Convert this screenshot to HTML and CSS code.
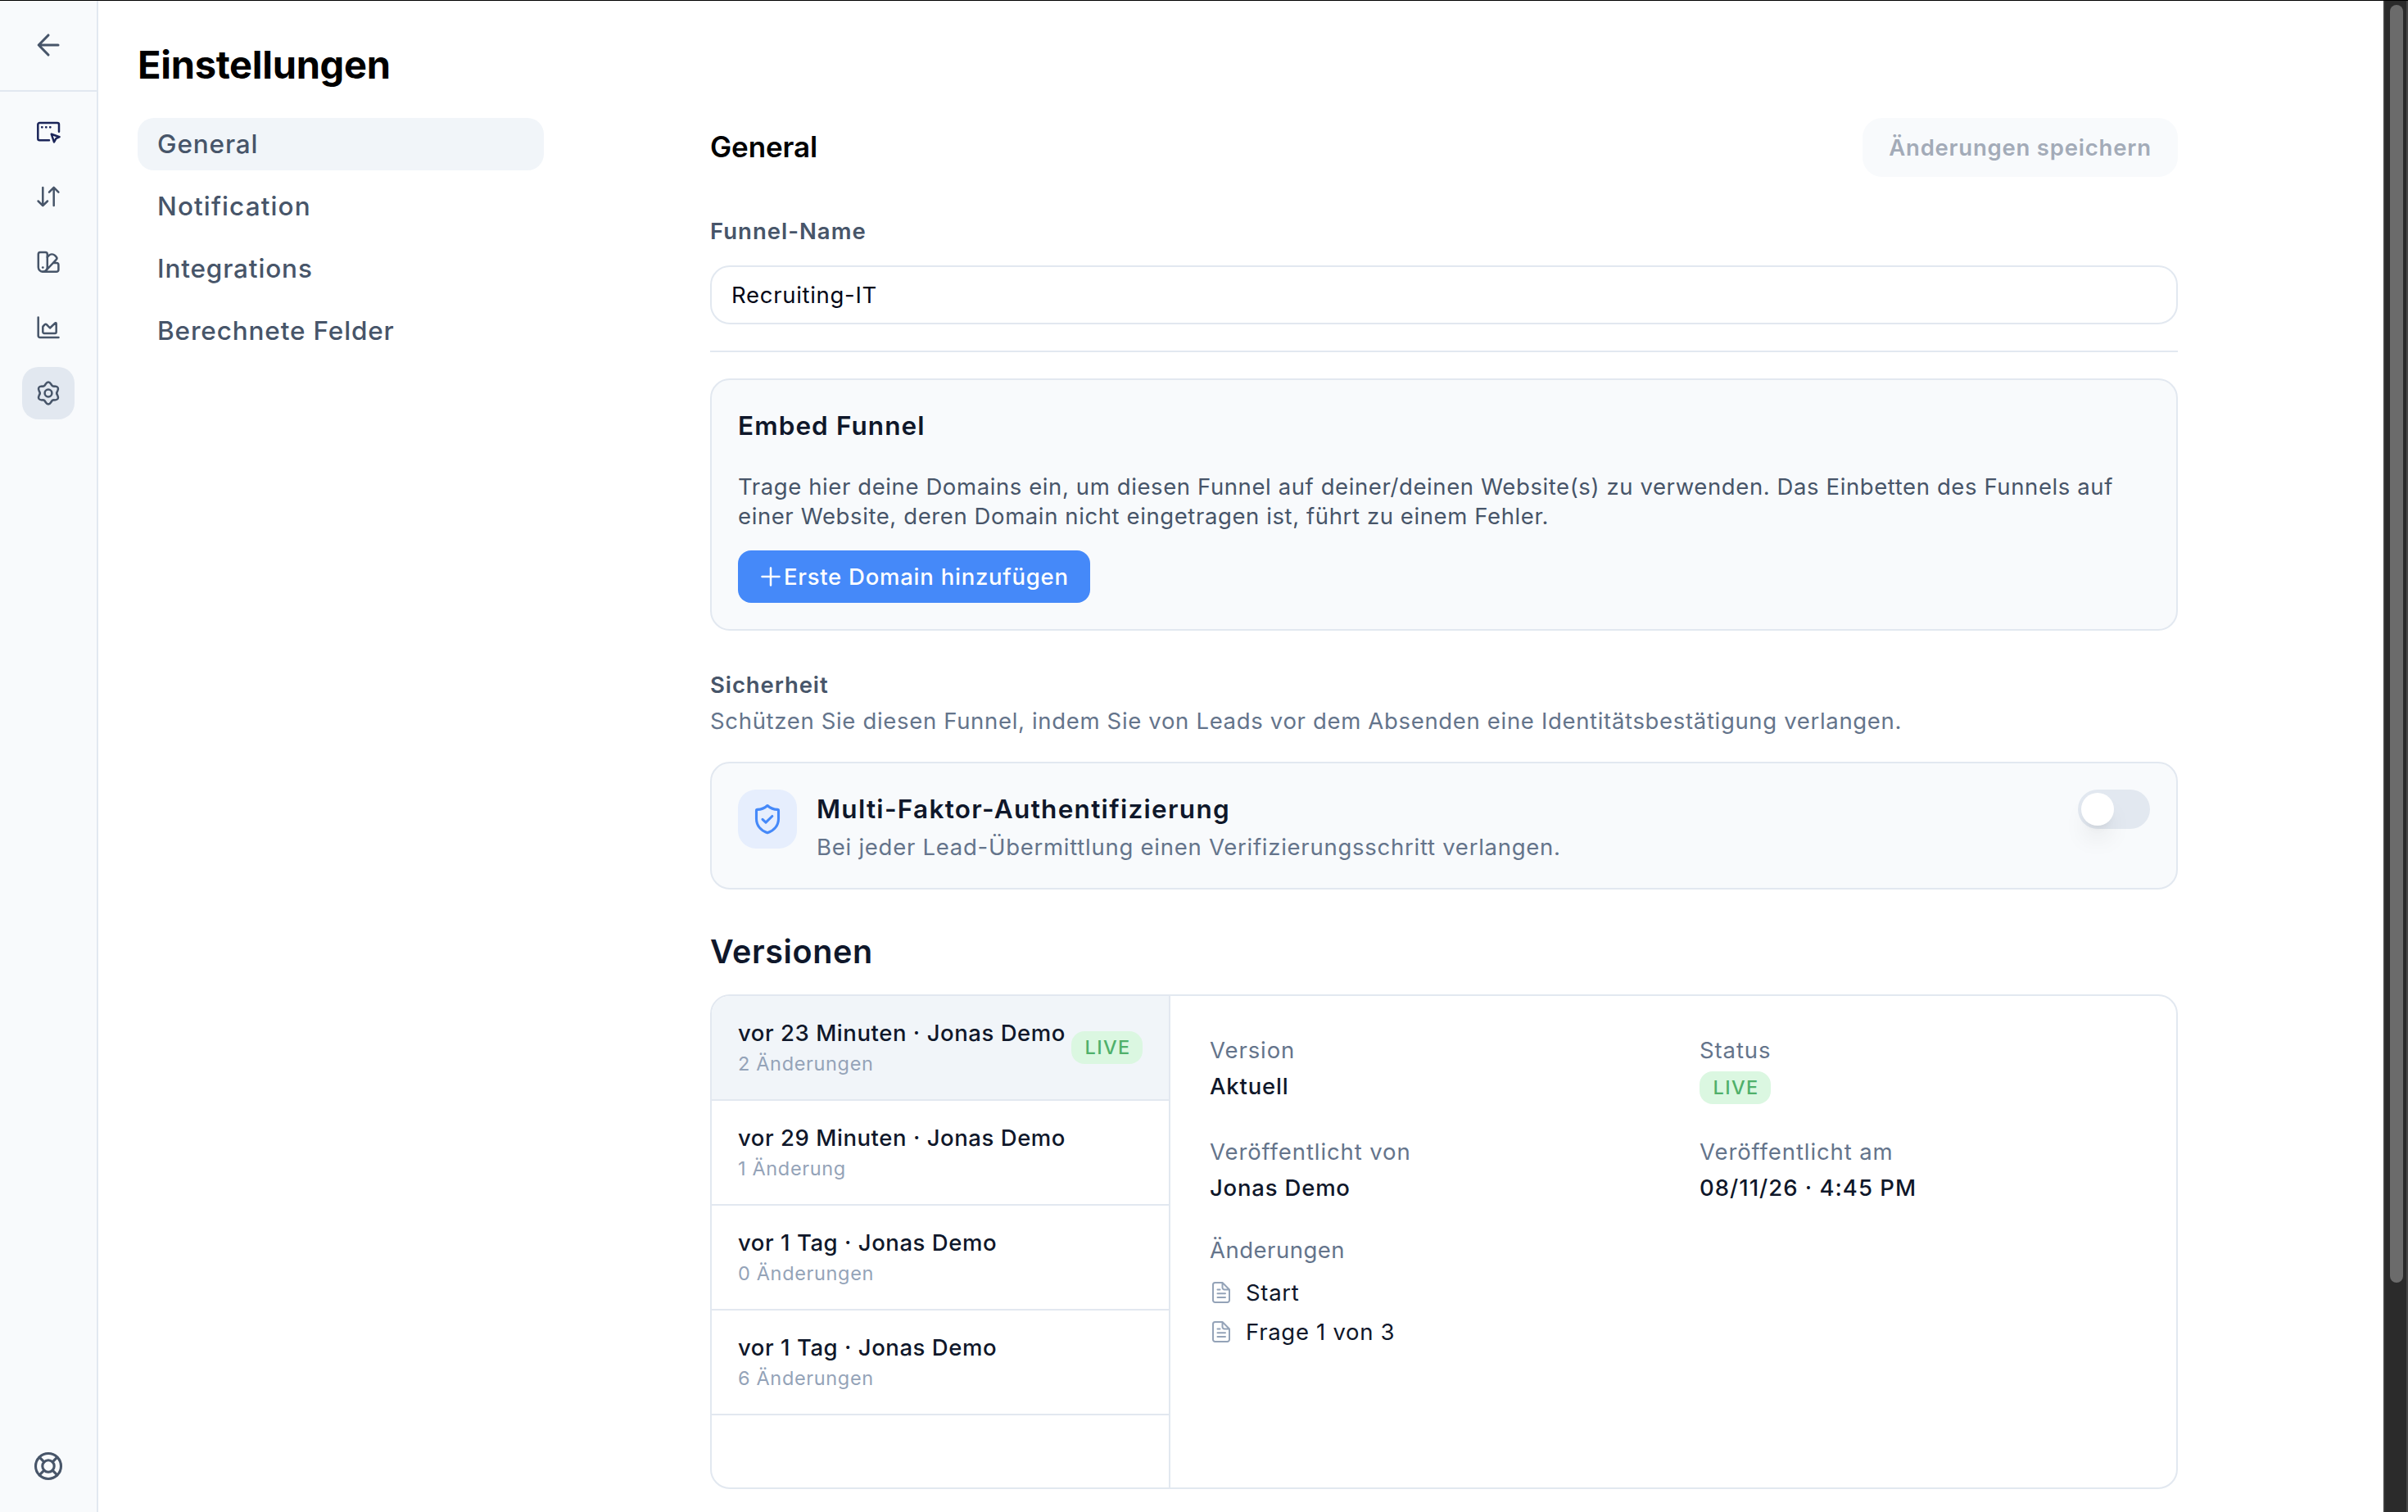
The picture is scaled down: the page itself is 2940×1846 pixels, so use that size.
FILE: index.html
```
<!DOCTYPE html>
<html lang="de">
<head>
    <meta charset="UTF-8">
    <meta name="viewport" content="width=device-width, initial-scale=1.0">
    <title>Einstellungen</title>
    <link rel="stylesheet" href="styles.css">
</head>
<body>
    <div class="app">
        <aside class="sidebar">
            <a class="back" title="Zurück">
                <svg class="icon icon-lg" viewBox="0 0 40 40"><path d="M32 20H8.5M20 8L8.2 20L20 32"/></svg>
            </a>
            <nav class="sidebar-nav">
                <a class="side-btn brand">
                    <svg class="icon" viewBox="0 0 32 32"><path d="M17 27.3H5.3a2 2 0 0 1-2-2V8a2 2 0 0 1 2-2H27a2 2 0 0 1 2 2v8.7"/><path d="M19.8 19.8l9.8 3.4-4.2 1.9-2.4 4.3z"/><path stroke-width="2.8" d="M8.3 11.3h.01M13.3 11.3h.01M18.3 11.3h.01"/></svg>
                </a>
                <a class="side-btn">
                    <svg class="icon" viewBox="0 0 32 32"><path d="M9.3 5v22M3.6 21.5l5.7 5.7 5.7-5.7M22.7 27V5M17 10.6l5.7-5.7 5.7 5.7"/></svg>
                </a>
                <a class="side-btn">
                    <svg class="icon" viewBox="0 0 32 32"><path d="M6 4h6.4a2.4 2.4 0 0 1 2.4 2.4v15.9a5.5 5.5 0 0 1-11 0V6.4A2.4 2.4 0 0 1 6 4z"/><path d="M14.8 9.8l1.7-1.7a5.6 5.6 0 0 1 7.6-.2l1.6 1.7a2.4 2.4 0 0 1 0 3.3L12.5 27M22 17h4a2.4 2.4 0 0 1 2.4 2.4v6a2.4 2.4 0 0 1-2.4 2.4H9.3"/><path stroke-width="2.8" d="M9.3 22.6h.01"/></svg>
                </a>
                <a class="side-btn">
                    <svg class="icon" viewBox="0 0 32 32"><path d="M3.7 3.6V26a2 2 0 0 0 2 2H28.5"/><path d="M9.3 15.3v6a1.6 1.6 0 0 0 1.6 1.6h13.2a1.6 1.6 0 0 0 1.6-1.6V11.2c0-1-.9-1.3-1.6-.6L18 16.5l-4.2-4.3c-.7-.7-1.3-.7-2 0l-1.8 1.8c-.5.5-.7.9-.7 1.3z"/></svg>
                </a>
                <a class="side-btn active">
                    <svg class="icon" viewBox="0 0 32 32"><path d="M19.36 5Q20.6 8.03 23.84 7.59Q29.86 8 27.2 13.41Q25.2 16 27.2 18.59Q29.86 24 23.84 24.41Q20.6 23.97 19.36 27Q16 32 12.64 27Q11.4 23.97 8.16 24.41Q2.14 24 4.8 18.59Q6.8 16 4.8 13.41Q2.14 8 8.16 7.59Q11.4 8.03 12.64 5Q16 0 19.36 5Z"/><circle cx="16" cy="16" r="4.4"/></svg>
                </a>
            </nav>
            <a class="help" title="Hilfe">
                <svg class="icon icon-lg" viewBox="0 0 40 40"><circle cx="20" cy="20" r="15.5"/><circle cx="20" cy="20" r="7.2"/><path d="M9.2 9.2l5.6 5.6M25.2 25.2l5.6 5.6M30.8 9.2l-5.6 5.6M14.8 25.2l-5.6 5.6"/></svg>
            </a>
        </aside>

        <main class="page">
            <h1>Einstellungen</h1>
            <div class="columns">
                <nav class="menu">
                    <a class="menu-item active">General</a>
                    <a class="menu-item wide">Notification</a>
                    <a class="menu-item">Integrations</a>
                    <a class="menu-item">Berechnete Felder</a>
                </nav>

                <div class="content">
                    <div class="content-head">
                        <h2>General</h2>
                        <button class="save" disabled>Änderungen speichern</button>
                    </div>

                    <label class="label" for="name">Funnel-Name</label>
                    <input class="input" id="name" type="text" value="Recruiting-IT">
                    <hr>

                    <section class="card">
                        <h3>Embed Funnel</h3>
                        <p class="embed-text">Trage hier deine Domains ein, um diesen Funnel auf deiner/deinen Website(s) zu verwenden. Das Einbetten des Funnels auf einer Website, deren Domain nicht eingetragen ist, führt zu einem Fehler.</p>
                        <button class="add">
                            <svg class="icon plus" viewBox="0 0 28 28"><path d="M14 3.5v21M3.5 14h21"/></svg>
                            <span>Erste Domain hinzufügen</span>
                        </button>
                    </section>

                    <div class="label security">Sicherheit</div>
                    <p class="hint">Schützen Sie diesen Funnel, indem Sie von Leads vor dem Absenden eine Identitätsbestätigung verlangen.</p>

                    <section class="card mfa">
                        <div class="mfa-icon">
                            <svg class="icon icon-lg" viewBox="0 0 40 40"><path d="M20 3.5c-3.3 3-7.8 4.9-12.3 4.9-.7 0-1.2.5-1.2 1.2V19.5C6.5 28 12 34.3 20 36.7 28 34.3 33.5 28 33.5 19.5V9.6c0-.7-.5-1.2-1.2-1.2C27.8 8.4 23.3 6.5 20 3.5z"/><path d="M14 20.3l4 3.8 7.8-7.6"/></svg>
                        </div>
                        <div class="mfa-text">
                            <h3>Multi-Faktor-Authentifizierung</h3>
                            <p>Bei jeder Lead-Übermittlung einen Verifizierungsschritt verlangen.</p>
                        </div>
                        <div class="toggle"><span class="knob"></span></div>
                    </section>

                    <h2 class="versions-title">Versionen</h2>
                    <section class="versions">
                        <div class="version-list">
                            <div class="version selected">
                                <div>
                                    <div class="version-name">vor 23 Minuten · Jonas Demo</div>
                                    <div class="version-count">2 Änderungen</div>
                                </div>
                                <span class="badge">LIVE</span>
                            </div>
                            <div class="version">
                                <div>
                                    <div class="version-name">vor 29 Minuten · Jonas Demo</div>
                                    <div class="version-count">1 Änderung</div>
                                </div>
                            </div>
                            <div class="version">
                                <div>
                                    <div class="version-name">vor 1 Tag · Jonas Demo</div>
                                    <div class="version-count">0 Änderungen</div>
                                </div>
                            </div>
                            <div class="version">
                                <div>
                                    <div class="version-name">vor 1 Tag · Jonas Demo</div>
                                    <div class="version-count">6 Änderungen</div>
                                </div>
                            </div>
                        </div>
                        <div class="detail">
                            <div class="detail-grid">
                                <div>
                                    <div class="key">Version</div>
                                    <div class="value">Aktuell</div>
                                </div>
                                <div>
                                    <div class="key">Status</div>
                                    <span class="badge">LIVE</span>
                                </div>
                                <div>
                                    <div class="key">Veröffentlicht von</div>
                                    <div class="value">Jonas Demo</div>
                                </div>
                                <div>
                                    <div class="key">Veröffentlicht am</div>
                                    <div class="value date">08/11/26 · 4:45 PM</div>
                                </div>
                            </div>
                            <div class="key changes-title">Änderungen</div>
                            <ul class="changes">
                                <li>
                                    <svg class="icon doc" viewBox="0 0 28 28"><path d="M15.5 2H6.5a2.5 2.5 0 0 0-2.5 2.5v19A2.5 2.5 0 0 0 6.5 26h15a2.5 2.5 0 0 0 2.5-2.5V10.5zM15.5 2v6a2.5 2.5 0 0 0 2.5 2.5h6M9.5 10.5h3M9.5 15.3h9.5M9.5 20h9.5"/></svg>
                                    Start
                                </li>
                                <li>
                                    <svg class="icon doc" viewBox="0 0 28 28"><path d="M15.5 2H6.5a2.5 2.5 0 0 0-2.5 2.5v19A2.5 2.5 0 0 0 6.5 26h15a2.5 2.5 0 0 0 2.5-2.5V10.5zM15.5 2v6a2.5 2.5 0 0 0 2.5 2.5h6M9.5 10.5h3M9.5 15.3h9.5M9.5 20h9.5"/></svg>
                                    Frage 1 von 3
                                </li>
                            </ul>
                        </div>
                    </section>
                </div>
            </div>
        </main>

        <div class="scrollbar"><div class="thumb"></div></div>
    </div>
</body>
</html>
```
FILE: styles.css
```
* {
    box-sizing: border-box;
}

body {
    margin: 0;
    background: #fff;
    color: #0f172a;
    font-family: Inter, "Liberation Sans", sans-serif;
    font-size: 27.5px;
    letter-spacing: 0.7px;
    overflow: hidden;
}

h1, h2, h3, p, ul {
    margin: 0;
    padding: 0;
}

button, input {
    font: inherit;
    letter-spacing: inherit;
    border: none;
}

.app {
    display: flex;
    height: 1846px;
    border-top: 1px solid #000;
}

.icon {
    width: 32px;
    height: 32px;
    flex: none;
    fill: none;
    stroke: currentColor;
    stroke-width: 2.5;
    stroke-linecap: round;
    stroke-linejoin: round;
}

.icon-lg {
    width: 40px;
    height: 40px;
    stroke-width: 3.1;
}

/* sidebar */
.sidebar {
    display: flex;
    flex-direction: column;
    align-items: center;
    width: 120px;
    flex: none;
    background: #f8fafc;
    border-right: 2px solid #e2e8f0;
    color: #475569;
}

.back {
    display: flex;
    align-items: center;
    justify-content: center;
    width: 100%;
    height: 111px;
    padding-bottom: 2px;
    border-bottom: 2px solid #e2e8f0;
}

.sidebar-nav {
    display: flex;
    flex-direction: column;
    gap: 16px;
    padding-top: 16px;
}

.side-btn {
    display: flex;
    align-items: center;
    justify-content: center;
    width: 64px;
    height: 64px;
    border-radius: 20px;
}

.side-btn.brand {
    color: #1b2559;
}

.side-btn.active {
    background: #e2e8f0;
}

.help {
    display: flex;
    margin-top: auto;
    padding-bottom: 36px;
}

/* page */
.page {
    flex: 1;
    padding: 47px 251px 0 48px;
}

h1 {
    color: #000;
    font-size: 47px;
    font-weight: 700;
    line-height: 62px;
    letter-spacing: -0.3px;
}

.columns {
    display: flex;
    justify-content: space-between;
    margin-top: 34px;
}

.menu {
    display: flex;
    flex-direction: column;
    gap: 12px;
    width: 496px;
}

.menu-item {
    padding: 0 24px;
    border-radius: 20px;
    color: #475569;
    font-size: 31.5px;
    font-weight: 550;
    line-height: 64px;
    letter-spacing: 0.85px;
}

.menu-item.wide {
    letter-spacing: 1.1px;
}

.menu-item.active {
    background: #f1f5f9;
}

.content {
    width: 1792px;
}

.content-head {
    display: flex;
    align-items: center;
    justify-content: space-between;
    height: 72px;
}

h2 {
    color: #000;
    font-size: 35px;
    font-weight: 600;
    line-height: 44px;
    letter-spacing: -0.1px;
}

.content-head h2 {
    padding-bottom: 2px;
}

.save {
    width: 385px;
    height: 72px;
    padding: 0;
    border-radius: 24px;
    background: #f8fafc;
    color: #a3abb8;
    font-weight: 600;
    letter-spacing: 0.78px;
}

.label {
    display: block;
    margin-top: 48px;
    color: #475569;
    font-weight: 600;
    line-height: 36px;
    letter-spacing: 1px;
}

.input {
    display: block;
    width: 100%;
    height: 72px;
    margin-top: 24px;
    padding: 0 24px;
    border: 2px solid #e2e8f0;
    border-radius: 24px;
    background: #fff;
    color: #020617;
}

hr {
    height: 2px;
    margin: 32px 0;
    border: none;
    background: #e2e8f0;
}

.card {
    padding: 32px;
    border: 2px solid #e2e8f0;
    border-radius: 24px;
    background: #f8fafc;
}

h3 {
    font-size: 31.5px;
    font-weight: 600;
    line-height: 48px;
    letter-spacing: 1.1px;
}

.embed-text {
    margin-top: 32px;
    color: #475569;
    line-height: 36px;
    letter-spacing: 0.6px;
}

.add {
    display: flex;
    align-items: center;
    gap: 2px;
    width: 430px;
    height: 64px;
    margin-top: 24px;
    padding: 0 0 0 26px;
    border-radius: 16px;
    background: #4589f9;
    color: #fff;
    font-weight: 550;
    letter-spacing: 0.75px;
}

.plus {
    width: 28px;
    height: 28px;
}

.label.security {
    letter-spacing: 0.9px;
}

.hint {
    margin: 6px 0 30px;
    color: #64748b;
    line-height: 40px;
    letter-spacing: 0.67px;
}

/* multi factor card */
.mfa {
    display: flex;
    height: 156px;
}

.mfa-icon {
    display: flex;
    align-items: center;
    justify-content: center;
    width: 72px;
    height: 72px;
    border-radius: 22px;
    background: #e6eefd;
    color: #4589f9;
}

.mfa-text {
    flex: 1;
    margin-left: 24px;
}

.mfa-text h3 {
    letter-spacing: 1.3px;
}

.mfa-text p {
    color: #64748b;
    line-height: 44px;
    letter-spacing: 0.74px;
}

.toggle {
    width: 88px;
    height: 48px;
    padding: 4px;
    border-radius: 24px;
    background: #e2e8f0;
}

.knob {
    display: block;
    width: 40px;
    height: 40px;
    border-radius: 50%;
    background: #fff;
    box-shadow: 0 20px 30px -6px rgba(0, 0, 0, 0.1), 0 8px 12px -8px rgba(0, 0, 0, 0.1);
}

/* versions */
.versions-title {
    margin: 48px 0 24px;
    color: #0f172a;
    font-size: 39.5px;
    line-height: 56px;
    letter-spacing: 0.6px;
}

.versions {
    display: flex;
    height: 604px;
    border: 2px solid #e2e8f0;
    border-radius: 24px;
    overflow: hidden;
}

.version-list {
    width: 560px;
    flex: none;
    border-right: 2px solid #e2e8f0;
}

.version {
    display: flex;
    align-items: center;
    justify-content: space-between;
    height: 128px;
    padding: 0 32px;
    border-bottom: 2px solid #e2e8f0;
    white-space: nowrap;
}

.version.selected {
    background: #f1f5f9;
}

.version-name {
    font-weight: 550;
    line-height: 34px;
    letter-spacing: 0.55px;
}

.version-count {
    margin-top: 4px;
    color: #94a3b8;
    font-size: 23.5px;
    line-height: 33px;
    letter-spacing: 0.65px;
}

.badge {
    display: block;
    width: 87px;
    height: 40px;
    padding-left: 2px;
    border-radius: 16px;
    background: #dbf7e1;
    color: #4fb06a;
    font-size: 23.5px;
    font-weight: 550;
    line-height: 40px;
    letter-spacing: 1.4px;
    text-align: center;
}

.detail {
    flex: 1;
    padding: 46px 48px;
}

.detail-grid {
    display: grid;
    grid-template-columns: 1fr 1fr;
    gap: 38px 64px;
}

.key {
    color: #64748b;
    line-height: 40px;
}

.detail-grid .badge {
    margin-top: 6px;
}

.detail-grid .key {
    letter-spacing: 0.9px;
}

.value {
    margin-top: 4px;
    font-weight: 550;
    line-height: 40px;
    letter-spacing: 0.8px;
}

.value.date {
    letter-spacing: 1px;
}

.changes-title {
    margin-top: 36px;
    letter-spacing: 0.5px;
}

.changes {
    display: flex;
    flex-direction: column;
    gap: 8px;
    margin-top: 12px;
    list-style: none;
}

.changes li {
    display: flex;
    align-items: center;
    gap: 16px;
    line-height: 40px;
}

.doc {
    width: 28px;
    height: 28px;
    color: #94a3b8;
    stroke-width: 2;
}

/* scrollbar */
.scrollbar {
    width: 30px;
    flex: none;
    padding: 5px 4px 0 6px;
    border-left: 2px solid #3c3c3c;
    border-right: 2px solid #484848;
    background: #2b2b2b;
}

.thumb {
    width: 16px;
    height: 1560px;
    border-radius: 8px;
    background: #6b6b6b;
}
```
